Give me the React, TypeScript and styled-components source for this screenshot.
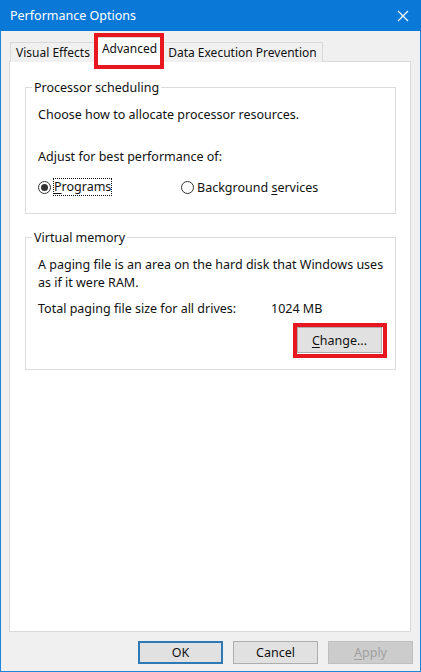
import styled, { createGlobalStyle } from 'styled-components';

const GlobalStyle = createGlobalStyle`
  html, body {
    margin: 0;
    padding: 0;
    background: #f0f0f0;
  }
  body {
    font-family: "Noto Sans", "Segoe UI", sans-serif;
  }
`;

const Window = styled.div`
  width: 421px;
  height: 672px;
  box-sizing: border-box;
  display: flex;
  flex-direction: column;
  background: #f0f0f0;
  border: 1px solid #1c84d9;
  border-top: none;
  font-size: 12.5px;
  color: #111;
`;

const TitleBar = styled.div`
  height: 31px;
  flex-shrink: 0;
  margin: 0 -1px;
  display: flex;
  align-items: center;
  justify-content: space-between;
  padding: 0 12px 0 10px;
  background: #0a78d7;
  color: #fff;
  font-size: 12.5px;
`;

const CloseIcon = styled.svg`
  width: 12px;
  height: 12px;
`;

const Body = styled.div`
  flex: 1;
  display: flex;
  flex-direction: column;
  padding: 7px;
`;

const TabStrip = styled.div`
  display: flex;
  align-items: flex-end;
  height: 24px;
  padding-left: 2px;
  position: relative;
  z-index: 1;
  font-size: 12px;
`;

const Tab = styled.div<{ $active?: boolean }>`
  position: relative;
  box-sizing: border-box;
  height: ${p => (p.$active ? '25px' : '20px')};
  margin: ${p => (p.$active ? '0 -2px 0 -1px' : '0')};
  padding: 0 ${p => (p.$active ? '6px' : '5px')};
  display: flex;
  align-items: ${p => (p.$active ? 'flex-start' : 'center')};
  padding-top: ${p => (p.$active ? '2px' : '0')};
  border: 1px solid #d9d9d9;
  border-bottom: ${p => (p.$active ? '1px solid #fff' : 'none')};
  background: ${p => (p.$active ? '#fff' : '#f0f0f0')};
  z-index: ${p => (p.$active ? 2 : 0)};
  white-space: nowrap;
`;

const Highlight = styled.span<{ $inset: string }>`
  position: absolute;
  inset: ${p => p.$inset};
  border: 4px solid #e8161f;
  pointer-events: none;
`;

const Panel = styled.div`
  flex: 1;
  margin: -1px 2px 0 1px;
  background: #fff;
  border: 1px solid #d9d9d9;
  padding: 17px 14px 0 15px;
  display: flex;
  flex-direction: column;
  gap: 15px;
`;

const Group = styled.fieldset<{ $pb: number }>`
  margin: 0;
  min-width: 0;
  border: 1px solid #dcdcdc;
  padding: 10px 8px ${p => p.$pb}px 12px;
`;

const Legend = styled.legend`
  margin-left: -6px;
  padding: 0 2px;
  line-height: 17px;
`;

const Text = styled.div<{ $mt?: number }>`
  line-height: 18px;
  margin-top: ${p => p.$mt ?? 0}px;
`;

const RadioRow = styled.div`
  display: flex;
  align-items: center;
  height: 18px;
  margin-top: 12px;
`;

const Radio = styled.label<{ $width?: number }>`
  display: flex;
  align-items: center;
  gap: 3px;
  width: ${p => (p.$width ? `${p.$width}px` : 'auto')};
`;

const RadioCircle = styled.span<{ $checked?: boolean }>`
  width: 11px;
  height: 11px;
  border-radius: 50%;
  border: 1px solid #333;
  background: #fff;
  display: flex;
  align-items: center;
  justify-content: center;
  &::after {
    content: '';
    display: ${p => (p.$checked ? 'block' : 'none')};
    width: 7px;
    height: 7px;
    border-radius: 50%;
    background: #333;
  }
`;

const FocusLabel = styled.span`
  outline: 1px dotted #111;
  outline-offset: 0;
  line-height: 16px;
`;

const SizeRow = styled.div`
  display: flex;
  line-height: 18px;
  margin-top: 8px;
`;

const SizeLabel = styled.span`
  width: 233px;
`;

const ChangeRow = styled.div`
  display: flex;
  justify-content: flex-end;
  margin-top: 9px;
  padding-right: 5px;
`;

const Button = styled.button<{ $variant?: 'default' | 'disabled' }>`
  position: relative;
  box-sizing: border-box;
  width: 85px;
  height: 23px;
  padding: 0;
  font: inherit;
  font-size: 12.5px;
  color: ${p => (p.$variant === 'disabled' ? '#a0a0a0' : '#111')};
  background: ${p => (p.$variant === 'disabled' ? '#cccccc' : '#e1e1e1')};
  border: ${p =>
    p.$variant === 'default'
      ? '2px solid #2f79b5'
      : p.$variant === 'disabled'
      ? '1px solid #bfbfbf'
      : '1px solid #adadad'};
`;

const TallButton = styled(Button)`
  height: 26px;
`;

const Footer = styled.div`
  display: flex;
  justify-content: flex-end;
  gap: 10px;
  padding: 9px 0 0;
  height: 23px;
`;

const U = styled.span`
  text-decoration: underline;
  text-underline-offset: 2px;
`;

export default function App() {
  return (
    <>
      <GlobalStyle />
      <Window>
        <TitleBar>
          <span>Performance Options</span>
          <CloseIcon viewBox="0 0 12 12">
            <path d="M1 1 L11 11 M11 1 L1 11" stroke="#fff" strokeWidth="1.2" fill="none" />
          </CloseIcon>
        </TitleBar>
        <Body>
          <TabStrip>
            <Tab>Visual Effects</Tab>
            <Tab $active>
              Advanced
              <Highlight $inset="-5px -1px -8px -2px" />
            </Tab>
            <Tab>Data Execution Prevention</Tab>
          </TabStrip>
          <Panel>
            <Group $pb={17}>
              <Legend>Processor scheduling</Legend>
              <Text>Choose how to allocate processor resources.</Text>
              <Text $mt={24}>Adjust for best performance of:</Text>
              <RadioRow>
                <Radio $width={143}>
                  <RadioCircle $checked />
                  <FocusLabel>
                    <U>P</U>rograms
                  </FocusLabel>
                </Radio>
                <Radio>
                  <RadioCircle />
                  <span>
                    Background <U>s</U>ervices
                  </span>
                </Radio>
              </RadioRow>
            </Group>
            <Group $pb={16}>
              <Legend>Virtual memory</Legend>
              <Text>A paging file is an area on the hard disk that Windows uses as if it were RAM.</Text>
              <SizeRow>
                <SizeLabel>Total paging file size for all drives:</SizeLabel>
                <span>1024 MB</span>
              </SizeRow>
              <ChangeRow>
                <TallButton>
                  <U>C</U>hange...
                  <Highlight $inset="-5px -6px -6px -5px" />
                </TallButton>
              </ChangeRow>
            </Group>
          </Panel>
          <Footer>
            <Button $variant="default">OK</Button>
            <Button>Cancel</Button>
            <Button $variant="disabled">
              <U>A</U>pply
            </Button>
          </Footer>
        </Body>
      </Window>
    </>
  );
}
